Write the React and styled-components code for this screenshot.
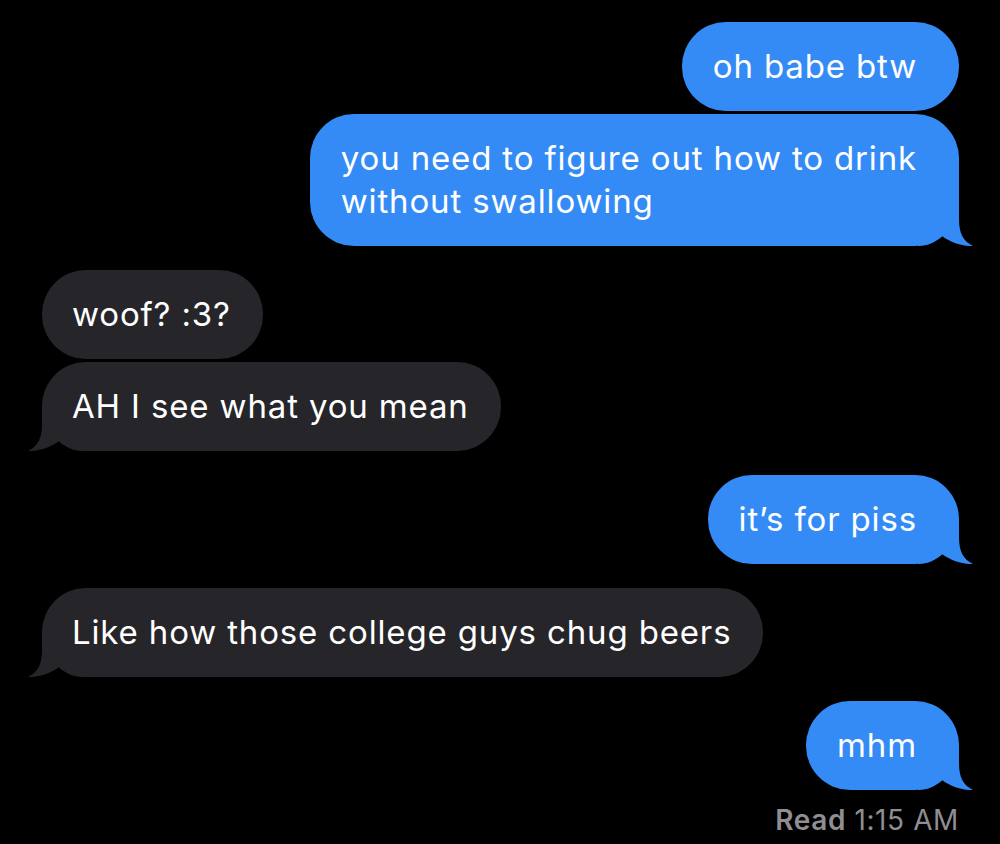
import React from "react";
import styled, { createGlobalStyle } from "styled-components";

const colors = {
  sent: "#348bf6",
  received: "#262529",
  receipt: "#8e8e93",
};

const GlobalStyle = createGlobalStyle`
  html, body {
    margin: 0;
    background: #000;
  }
  body {
    font-family: Inter, "Noto Sans", sans-serif;
    -webkit-font-smoothing: antialiased;
  }
`;

const Thread = styled.div`
  display: flex;
  flex-direction: column;
  gap: 24px;
  width: 1000px;
  min-height: 844px;
  box-sizing: border-box;
  padding: 22px 41px 0 42px;
  background: #000;
`;

const Group = styled.div`
  display: flex;
  flex-direction: column;
  gap: 3px;
  align-items: ${props => (props.$mine ? "flex-end" : "flex-start")};
`;

const Bubble = styled.div`
  position: relative;
  max-width: 740px;
  box-sizing: border-box;
  padding: ${props => (props.$mine ? "23px 42px 23px 31px" : "23px 32px 23px 30px")};
  border-radius: 44px;
  background: ${props => (props.$mine ? colors.sent : colors.received)};
  color: #fff;
  font-family: Inter, "Noto Sans", sans-serif;
  font-size: 33px;
  line-height: 43px;
  letter-spacing: 0.85px;
  white-space: pre-line;
`;

const Text = styled.span`
  position: relative;
  z-index: 1;
`;

const TailSvg = styled.svg`
  position: absolute;
  bottom: 0;
  z-index: 0;
  width: 56px;
  height: 43px;
  ${props =>
    props.$mine ? "right: -15px;" : "left: -15px; transform: scaleX(-1);"}
`;

const Receipt = styled.div`
  margin-top: 11px;
  font-family: Inter, "Noto Sans", sans-serif;
  font-size: 28px;
  line-height: 32px;
  color: ${colors.receipt};
  letter-spacing: 0.6px;
`;

const ReadLabel = styled.span`
  font-weight: 600;
`;

const Tail = ({ mine }) => (
  <TailSvg $mine={mine} viewBox="0 0 56 43">
    <path
      d="M0 0 H41 V16 C41 30 45 38 55 43 C46 43.5 33 40 24 33 C18 39 10 43 0 43 Z"
      fill={mine ? colors.sent : colors.received}
    />
  </TailSvg>
);

const Message = ({ mine, tail, children }) => (
  <Bubble $mine={mine}>
    <Text>{children}</Text>
    {tail && <Tail mine={mine} />}
  </Bubble>
);

const groups = [
  { mine: true, texts: ["oh babe btw", "you need to figure out how to drink\nwithout swallowing"] },
  { mine: false, texts: ["woof? :3?", "AH I see what you mean"] },
  { mine: true, texts: ["it\u2019s for piss"] },
  { mine: false, texts: ["Like how those college guys chug beers"] },
  { mine: true, texts: ["mhm"], receipt: true },
];

export default function App() {
  return (
    <>
      <GlobalStyle />
      <Thread>
        {groups.map((group, i) => (
          <Group key={i} $mine={group.mine}>
            {group.texts.map((text, j) => (
              <Message key={j} mine={group.mine} tail={j === group.texts.length - 1}>
                {text}
              </Message>
            ))}
            {group.receipt && (
              <Receipt>
                <ReadLabel>Read</ReadLabel> 1:15 AM
              </Receipt>
            )}
          </Group>
        ))}
      </Thread>
    </>
  );
}
